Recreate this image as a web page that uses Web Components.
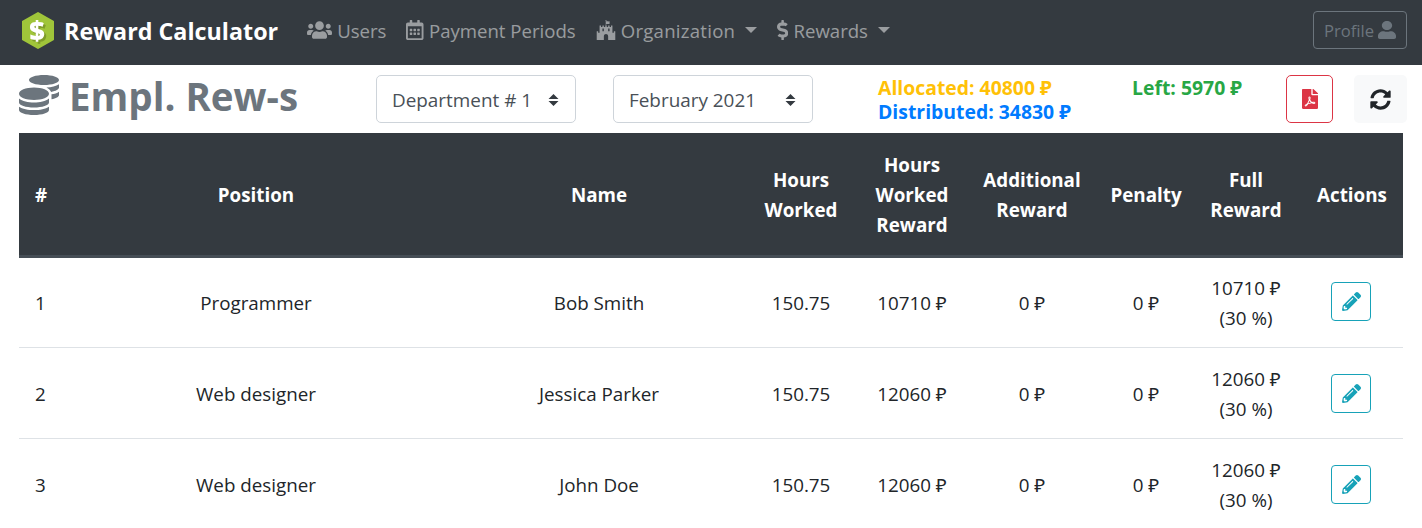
<!DOCTYPE html>
<html>
<head>
<meta charset="utf-8">
<title>Reward Calculator</title>
<style>
  html, body { margin: 0; background: #fff; overflow: hidden; height: 528px; }
  body { font-family: "Open Sans", "Noto Sans", sans-serif; color: #212529; }
</style>
</head>
<body>
<rc-navbar></rc-navbar>
<rc-toolbar></rc-toolbar>
<rc-table></rc-table>
<script>
// font awesome shapes, used by rc-icon
const ICONS = {
  users: ['0 0 640 512', 'M96 224c35.3 0 64-28.7 64-64s-28.7-64-64-64-64 28.7-64 64 28.7 64 64 64zm448 0c35.3 0 64-28.7 64-64s-28.7-64-64-64-64 28.7-64 64 28.7 64 64 64zm32 32h-64c-17.6 0-33.5 7.1-45.1 18.6 40.3 22.1 68.9 62 75.1 109.4h66c17.7 0 32-14.3 32-32v-32c0-35.3-28.7-64-64-64zm-256 0c61.9 0 112-50.1 112-112S381.9 32 320 32 208 82.1 208 144s50.1 112 112 112zm76.8 32h-8.3c-20.8 10-43.9 16-68.5 16s-47.6-6-68.5-16h-8.3C179.6 288 128 339.6 128 403.2V432c0 26.5 21.5 48 48 48h288c26.5 0 48-21.5 48-48v-28.8c0-63.6-51.6-115.2-115.2-115.2zm-223.7-13.4C161.5 263.1 145.6 256 128 256H64c-35.3 0-64 28.7-64 64v32c0 17.7 14.3 32 32 32h65.9c6.3-47.4 34.9-87.3 75.2-109.4z'],
  calendar: ['0 0 448 512', 'M148 288h-40c-6.6 0-12-5.4-12-12v-40c0-6.6 5.4-12 12-12h40c6.6 0 12 5.4 12 12v40c0 6.6-5.4 12-12 12zm108-12v-40c0-6.6-5.4-12-12-12h-40c-6.6 0-12 5.4-12 12v40c0 6.6 5.4 12 12 12h40c6.6 0 12-5.4 12-12zm96 0v-40c0-6.6-5.4-12-12-12h-40c-6.6 0-12 5.4-12 12v40c0 6.6 5.4 12 12 12h40c6.6 0 12-5.4 12-12zm-96 96v-40c0-6.6-5.4-12-12-12h-40c-6.6 0-12 5.4-12 12v40c0 6.6 5.4 12 12 12h40c6.6 0 12-5.4 12-12zm-96 0v-40c0-6.6-5.4-12-12-12h-40c-6.6 0-12 5.4-12 12v40c0 6.6 5.4 12 12 12h40c6.6 0 12-5.4 12-12zm192 0v-40c0-6.6-5.4-12-12-12h-40c-6.6 0-12 5.4-12 12v40c0 6.6 5.4 12 12 12h40c6.6 0 12-5.4 12-12zm96-260v352c0 26.5-21.5 48-48 48H48c-26.5 0-48-21.5-48-48V112c0-26.5 21.5-48 48-48h48V12c0-6.6 5.4-12 12-12h40c6.6 0 12 5.4 12 12v52h128V12c0-6.6 5.4-12 12-12h40c6.6 0 12 5.4 12 12v52h48c26.5 0 48 21.5 48 48zm-48 346V160H48v298c0 3.3 2.7 6 6 6h340c3.3 0 6-2.7 6-6z'],
  fort: ['0 0 512 512', 'M489.2 287.9h-27.4c-2.6 0-4.6 2-4.6 4.6v32h-36.6V146.2c0-2.6-2-4.6-4.6-4.6h-27.4c-2.6 0-4.6 2-4.6 4.6v32h-36.6v-32c0-2.6-2-4.6-4.6-4.6h-27.4c-2.6 0-4.6 2-4.6 4.6v32h-36.6v-32c0-6-8-4.6-11.7-4.6v-38c8.3-2 17.1-3.4 25.7-3.4 10.9 0 20.9 4.3 31.4 4.3 4.6 0 27.7-1.1 27.7-8v-60c0-2.6-2-4.6-4.6-4.6-5.1 0-15.1 4.3-24 4.3-9.7 0-20.9-4.3-32.6-4.3-8 0-16 1.1-23.7 2.9v-4.9c5.4-2.6 9.1-8.3 9.1-14.3 0-20.7-31.4-20.8-31.4 0 0 6 3.7 11.7 9.1 14.3v111.7c-3.7 0-11.7-1.4-11.7 4.6v32h-36.6v-32c0-2.6-2-4.6-4.6-4.6h-27.4c-2.6 0-4.6 2-4.6 4.6v32H128v-32c0-2.6-2-4.6-4.6-4.6H96c-2.6 0-4.6 2-4.6 4.6v178.3H54.8v-32c0-2.6-2-4.6-4.6-4.6H22.8c-2.6 0-4.6 2-4.6 4.6V512h182.9v-96c0-72.6 109.7-72.6 109.7 0v96h182.9V292.5c.1-2.6-1.9-4.6-4.5-4.6zm-288.1-4.5c0 2.6-2 4.6-4.6 4.6h-27.4c-2.6 0-4.6-2-4.6-4.6v-64c0-2.6 2-4.6 4.6-4.6h27.4c2.6 0 4.6 2 4.6 4.6v64zm146.4 0c0 2.6-2 4.6-4.6 4.6h-27.4c-2.6 0-4.6-2-4.6-4.6v-64c0-2.6 2-4.6 4.6-4.6h27.4c2.6 0 4.6 2 4.6 4.6v64z'],
  dollar: ['0 0 288 512', 'M209.2 233.4l-108-31.6C88.7 198.2 80 186.5 80 173.5c0-16.3 13.2-29.5 29.5-29.5h66.3c12.2 0 24.2 3.7 34.2 10.5 6.1 4.1 14.3 3.1 19.5-2l34.8-34c7.1-6.9 6.1-18.4-1.8-24.5C238 74.8 207.4 64.1 176 64V16c0-8.8-7.2-16-16-16h-32c-8.8 0-16 7.2-16 16v48h-2.5C45.8 64-5.4 118.7.5 183.6c4.2 46.1 39.4 83.6 83.8 96.6l102.5 30c12.5 3.7 21.2 15.3 21.2 28.3 0 16.3-13.2 29.5-29.5 29.5h-66.3C100 368 88 364.3 78 357.5c-6.1-4.1-14.3-3.1-19.5 2l-34.8 34c-7.1 6.9-6.1 18.4 1.8 24.5 24.5 19.2 55.1 29.9 86.5 30v48c0 8.8 7.2 16 16 16h32c8.8 0 16-7.2 16-16v-48.2c46.6-.9 90.3-28.6 105.7-72.7 21.5-61.6-14.6-124.8-72.5-141.7z'],
  user: ['0 0 448 512', 'M224 256c70.7 0 128-57.3 128-128S294.7 0 224 0 96 57.3 96 128s57.3 128 128 128zm89.6 32h-16.7c-22.2 10.2-46.9 16-72.9 16s-50.6-5.8-72.9-16h-16.7C60.2 288 0 348.2 0 422.4V464c0 26.5 21.5 48 48 48h352c26.5 0 48-21.5 48-48v-41.6c0-74.2-60.2-134.4-134.4-134.4z'],
  coins: ['0 0 512 512', 'M0 405.3V448c0 35.3 86 64 192 64s192-28.7 192-64v-42.7C342.7 434.4 267.2 448 192 448S41.3 434.4 0 405.3zM320 128c106 0 192-28.7 192-64S426 0 320 0 128 28.7 128 64s86 64 192 64zM0 300.4V352c0 35.3 86 64 192 64s192-28.7 192-64v-51.6c-41.3 34-116.9 51.6-192 51.6S41.3 334.4 0 300.4zm416 11c57.3-11.1 96-31.7 96-55.4v-42.7c-23.2 16.4-57.3 27.6-96 34.5v63.6zM192 160C86 160 0 195.8 0 240s86 80 192 80 192-35.8 192-80-86-80-192-80zm219.3 56.3c60-10.8 100.7-32 100.7-56.3v-42.7c-35.5 25.1-96.5 38.6-160.7 41.8 29.5 14.3 51.2 33.5 60 57.2z'],
  pdf: ['0 0 384 512', 'M181.9 256.1c-5-16-4.9-46.9-2-46.9 8.4 0 7.6 36.9 2 46.9zm-1.7 47.2c-7.7 20.2-17.3 43.3-28.4 62.7 18.3-7 39-17.2 62.9-21.9-12.7-9.6-24.9-23.4-34.5-40.8zM86.1 428.1c0 .8 13.2-5.4 34.9-40.2-6.7 6.3-29.1 24.5-34.9 40.2zM248 160h136v328c0 13.3-10.7 24-24 24H24c-13.3 0-24-10.7-24-24V24C0 10.7 10.7 0 24 0h200v136c0 13.2 10.8 24 24 24zm-8 171.8c-20-12.2-33.3-29-42.7-53.8 4.5-18.5 11.6-46.6 6.2-64.2-4.7-29.4-42.4-26.5-47.8-6.8-5 18.3-.4 44.1 8.1 77-11.6 27.6-28.7 64.6-40.8 85.8-.1 0-.1.1-.2.1-27.1 13.9-73.6 44.5-54.5 68 5.6 6.9 16 10 21.5 10 17.9 0 35.7-18 61.1-61.8 25.8-8.5 54.1-19.1 79-23.2 21.7 11.8 47.1 19.5 64 19.5 29.2 0 31.2-32 19.7-43.4-13.9-13.6-54.3-9.7-73.6-7.2zM377 105L279 7c-4.5-4.5-10.6-7-17-7h-6v128h128v-6.1c0-6.3-2.5-12.4-7-16.9zm-74.1 255.3c4.1-2.7-2.5-11.9-42.8-9 37.1 15.8 42.8 9 42.8 9z'],
  sync: ['0 0 512 512', 'M370.72 133.28C339.458 104.008 298.888 87.962 255.848 88c-77.458.068-144.328 53.178-162.791 126.85-1.344 5.363-6.122 9.15-11.651 9.15H24.103c-7.498 0-13.194-6.807-11.807-14.176C33.933 94.924 134.813 8 256 8c66.448 0 126.791 26.136 171.315 68.685L463.03 40.97C478.149 25.851 504 36.559 504 57.941V192c0 13.255-10.745 24-24 24H345.941c-21.382 0-32.09-25.851-16.971-40.971l41.75-41.749zM32 296h134.059c21.382 0 32.09 25.851 16.971 40.971l-41.75 41.75c31.262 29.273 71.835 45.319 114.876 45.28 77.418-.07 144.315-53.144 162.787-126.849 1.344-5.363 6.122-9.15 11.651-9.15h57.304c7.498 0 13.194 6.807 11.807 14.176C478.067 417.076 377.187 504 256 504c-66.448 0-126.791-26.136-171.315-68.685L48.97 471.03C33.851 486.149 8 475.441 8 454.059V320c0-13.255 10.745-24 24-24z'],
  pencil: ['0 0 512 512', 'M497.9 142.1l-46.1 46.1c-4.7 4.7-12.3 4.7-17 0l-111-111c-4.7-4.7-4.7-12.3 0-17l46.1-46.1c18.7-18.7 49.1-18.7 67.9 0l60.1 60.1c18.8 18.7 18.8 49.1 0 67.9zM284.2 99.8L21.6 362.4.4 483.9c-2.9 16.4 11.4 30.6 27.8 27.8l121.5-21.3 262.6-262.6c4.7-4.7 4.7-12.3 0-17l-111-111c-4.8-4.7-12.4-4.7-17.1 0zM124.1 339.9c-5.5-5.5-5.5-14.3 0-19.8l154-154c5.5-5.5 14.3-5.5 19.8 0s5.5 14.3 0 19.8l-154 154c-5.5 5.5-14.3 5.5-19.8 0zM88 424h48v36.3l-64.5 11.3-31.1-31.1L51.7 376H88v48z']
};

class RcIcon extends HTMLElement {
  connectedCallback() {
    const [box, d] = ICONS[this.getAttribute('name')];
    const [, , w, h] = box.split(' ').map(Number);
    const size = parseFloat(this.getAttribute('size') || 20);
    // width attribute stretches the glyph, the original icon font hinted some of them wider
    const width = parseFloat(this.getAttribute('width') || size * w / h);
    this.attachShadow({ mode: 'open' }).innerHTML = `
      <style>:host { display: inline-flex; flex: none; } svg { display: block; fill: currentColor; }</style>
      <svg viewBox="${box}" width="${width}" height="${size}" preserveAspectRatio="none"><path d="${d}"/></svg>`;
  }
}
customElements.define('rc-icon', RcIcon);

class RcNavLink extends HTMLElement {
  connectedCallback() {
    const caret = this.hasAttribute('caret') ? '<span class="caret"></span>' : '';
    this.attachShadow({ mode: 'open' }).innerHTML = `
      <style>
        :host { display: flex; align-items: center; gap: 5px; color: rgba(255,255,255,.5); font-size: 18.6px; white-space: nowrap; }
        :host([wide]) { letter-spacing: .25px; }
        .caret { width: 0; height: 0; margin-left: 5px; border-top: 6px solid; border-left: 6px solid transparent; border-right: 6px solid transparent; }
      </style>
      <slot></slot>${caret}`;
  }
}
customElements.define('rc-nav-link', RcNavLink);

class RcNavbar extends HTMLElement {
  connectedCallback() {
    this.attachShadow({ mode: 'open' }).innerHTML = `
      <style>
        :host { display: flex; align-items: center; height: 65px; background: #343a40; padding: 0 15px 5px 22px; box-sizing: border-box; }
        .brand { display: flex; align-items: center; gap: 10px; color: #fff; font-size: 23.3px; font-weight: 700; margin-right: 29px; white-space: nowrap; }
        .brand span { padding-top: 2px; }
        .links { display: flex; align-items: center; gap: 20px; flex: 1; }
        .profile { display: flex; align-items: center; gap: 4px; height: 38px; padding: 0 10px; box-sizing: border-box; border: 1px solid #6c757d; border-radius: 4px; color: #6c757d; font-size: 16.6px; }
        svg.logo { display: block; }
        .logo text { filter: drop-shadow(2px 2px 0 #7f9c2a); }
      </style>
      <div class="brand">
        <svg class="logo" width="32" height="37" viewBox="0 0 32 37">
          <path d="M16 1 31 9.500v18L16 36 1 27.500v-18z" fill="#a0c53a" stroke="#a0c53a" stroke-width="2" stroke-linejoin="round"/>
          <text x="15" y="28" text-anchor="middle" font-family="Open Sans" font-weight="800" font-size="27" fill="#fff">$</text>
        </svg>
        <span>Reward Calculator</span>
      </div>
      <div class="links">
        <rc-nav-link><rc-icon name="users" size="20"></rc-icon>Users</rc-nav-link>
        <rc-nav-link><rc-icon name="calendar" size="20"></rc-icon>Payment Periods</rc-nav-link>
        <rc-nav-link caret wide><rc-icon name="fort" size="20"></rc-icon>Organization</rc-nav-link>
        <rc-nav-link caret><rc-icon name="dollar" size="20"></rc-icon>Rewards</rc-nav-link>
      </div>
      <div class="profile">Profile <rc-icon name="user" size="18" width="18"></rc-icon></div>`;
  }
}
customElements.define('rc-navbar', RcNavbar);

class RcSelect extends HTMLElement {
  connectedCallback() {
    this.attachShadow({ mode: 'open' }).innerHTML = `
      <style>
        :host { display: flex; flex: none; align-items: center; justify-content: space-between; width: 200px; height: 48px; box-sizing: border-box; padding: 2px 16px 0 15px; border: 1px solid #ced4da; border-radius: 5px; color: #495057; font-size: 18.9px; background: #fff; white-space: nowrap; }
        svg { display: block; }
      </style>
      <slot></slot>
      <svg width="11" height="14" viewBox="0 0 11 14"><path d="M5.500 1 10.500 6H.5zM5.500 13 .5 8h10z" fill="#343a40"/></svg>`;
  }
}
customElements.define('rc-select', RcSelect);

class RcButton extends HTMLElement {
  connectedCallback() {
    this.attachShadow({ mode: 'open' }).innerHTML = `
      <style>
        :host { display: flex; flex: none; align-items: center; justify-content: center; box-sizing: border-box; border: 1px solid transparent; border-radius: 5px; }
        :host([variant=pdf]) { width: 47px; height: 48px; border-color: #dc3545; color: #dc3545; }
        :host([variant=sync]) { width: 53px; height: 48px; background: #f8f9fa; color: #212529; }
        :host([variant=edit]) { width: 40px; height: 39px; border-color: #17a2b8; color: #17a2b8; border-radius: 4px; }
      </style>
      <slot></slot>`;
  }
}
customElements.define('rc-button', RcButton);

class RcToolbar extends HTMLElement {
  connectedCallback() {
    this.attachShadow({ mode: 'open' }).innerHTML = `
      <style>
        :host { display: flex; align-items: center; height: 68px; padding: 0 15px 0 19px; box-sizing: border-box; }
        .title { display: flex; flex: none; align-items: center; gap: 10px; width: 357px; margin-bottom: 8px; color: #6c757d; font-size: 38.5px; font-weight: 700; white-space: nowrap; }
        .title span { padding-top: 2px; }
        rc-select + rc-select { margin-left: 37px; }
        .stats { flex: none; width: 254px; margin: 2px 0 0 65px; font-size: 19.4px; font-weight: 700; line-height: 24px; white-space: nowrap; }
        .left { flex: none; width: 154px; align-self: flex-start; margin-top: 11px; color: #28a745; font-size: 19.4px; font-weight: 700; line-height: 24px; white-space: nowrap; }
        .amber { color: #ffc107; } .blue { color: #007bff; }
        rc-button[variant=sync] { margin-left: 21px; }
      </style>
      <div class="title"><rc-icon name="coins" size="40"></rc-icon><span>Empl. Rew-s</span></div>
      <rc-select>Department # 1</rc-select>
      <rc-select>February 2021</rc-select>
      <div class="stats">
        <div class="amber">Allocated: 40800 ₽</div>
        <div class="blue">Distributed: 34830 ₽</div>
      </div>
      <div class="left">Left: 5970 ₽</div>
      <rc-button variant="pdf"><rc-icon name="pdf" size="20" width="16"></rc-icon></rc-button>
      <rc-button variant="sync"><rc-icon name="sync" size="21"></rc-icon></rc-button>`;
  }
}
customElements.define('rc-toolbar', RcToolbar);

const ROWS = [
  ['1', 'Programmer', 'Bob Smith', '150.75', '10710 ₽', '0 ₽', '0 ₽', '10710 ₽', '(30 %)'],
  ['2', 'Web designer', 'Jessica Parker', '150.75', '12060 ₽', '0 ₽', '0 ₽', '12060 ₽', '(30 %)'],
  ['3', 'Web designer', 'John Doe', '150.75', '12060 ₽', '0 ₽', '0 ₽', '12060 ₽', '(30 %)']
];

class RcTable extends HTMLElement {
  connectedCallback() {
    const heads = ['#', 'Position', 'Name', 'Hours<br>Worked', 'Hours<br>Worked<br>Reward', 'Additional<br>Reward', 'Penalty', 'Full<br>Reward', 'Actions'];
    const rows = ROWS.map(r => `
      <tr>
        <td class="num">${r[0]}</td>
        <td>${r[1]}</td><td>${r[2]}</td><td>${r[3]}</td><td>${r[4]}</td><td>${r[5]}</td><td>${r[6]}</td>
        <td>${r[7]}<br>${r[8]}</td>
        <td><rc-button variant="edit"><rc-icon name="pencil" size="19"></rc-icon></rc-button></td>
      </tr>`).join('');
    this.attachShadow({ mode: 'open' }).innerHTML = `
      <style>
        :host { display: block; padding: 0 19px; }
        table { border-collapse: collapse; width: 1384px; table-layout: fixed; font-size: 18.8px; line-height: 30px; }
        th { background: #343a40; color: #fff; font-weight: 700; font-size: 18.8px; text-align: center; height: 120px; padding: 2px 0 0; border-bottom: 3px solid #454d55; box-sizing: content-box; }
        th.num, td.num { text-align: left; padding-left: 16px; box-sizing: border-box; }
        td { text-align: center; height: 91px; padding: 1px 0 0; box-sizing: border-box; border-bottom: 1px solid #dee2e6; color: #212529; }
        td rc-button { margin: 0 0 0 30px; }
        tr:first-child td rc-button { margin-bottom: 4px; }
      </style>
      <table>
        <colgroup>
          <col style="width:36px"><col style="width:402px"><col style="width:284px"><col style="width:120px"><col style="width:102px"><col style="width:138px"><col style="width:90px"><col style="width:110px"><col style="width:102px">
        </colgroup>
        <thead><tr>${heads.map((h, i) => `<th class="${i ? '' : 'num'}">${h}</th>`).join('')}</tr></thead>
        <tbody>${rows}</tbody>
      </table>`;
  }
}
customElements.define('rc-table', RcTable);
</script>
</body>
</html>
